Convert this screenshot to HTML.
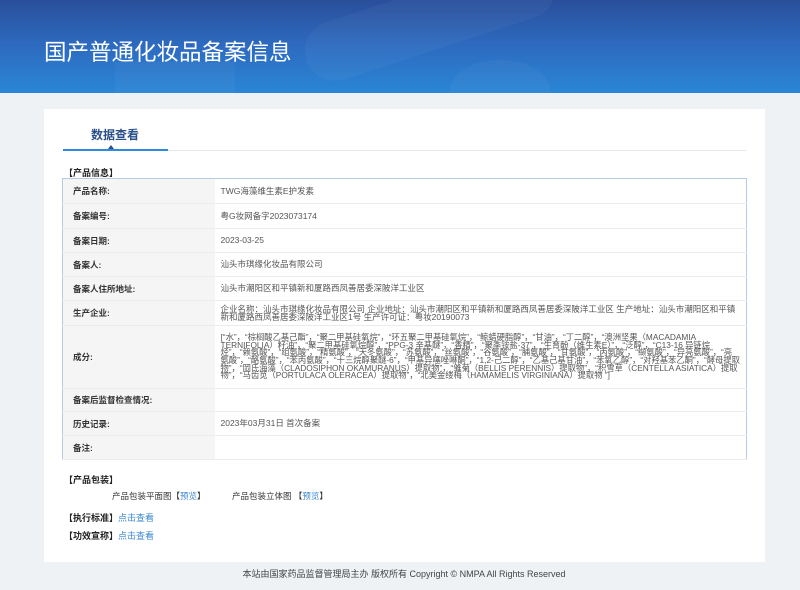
<!DOCTYPE html>
<html><head><meta charset="utf-8"><style>
*{margin:0;padding:0;box-sizing:border-box}
body{width:800px;height:590px;background:#eef2f5;font-family:"Liberation Sans","Noto Sans CJK SC",sans-serif;color:#333;position:relative;overflow:hidden}
.hd{position:absolute;left:0;top:0;width:800px;height:93px;background:linear-gradient(180deg,#2a4f9b 0%,#2d6bc0 50%,#2a86d6 100%);overflow:hidden}
.hd h1{position:absolute;left:44px;top:35px;font-size:22.5px;font-weight:normal;color:#fff;font-family:"Noto Sans CJK SC",sans-serif;letter-spacing:0}
.blob{position:absolute;border-radius:30px;background:rgba(255,255,255,0.035)}
.card{position:absolute;left:44px;top:109px;width:721px;height:453px;background:#fff}
.tab{position:absolute;left:91px;top:126px;font-size:12px;font-weight:bold;color:#2a4f8a}
.tl{position:absolute;left:63px;top:150px;width:683px;height:1px;background:#e3e6ea}
.tb{position:absolute;left:63px;top:149px;width:105px;height:2px;background:#2f8be0}
.tri{position:absolute;left:108px;top:145px;width:0;height:0;border-left:3px solid transparent;border-right:3px solid transparent;border-bottom:4px solid #2a4f8a}
.sec{position:absolute;font-size:9px;font-weight:bold;color:#222}
table{position:absolute;left:62px;top:178px;width:685px;border-collapse:collapse;border:1px solid #b8cbe4;font-size:8.5px}
td{border-bottom:1px solid #ebebeb;padding:0 6px;vertical-align:middle}
td.l{width:152px;background:#f5f5f5;font-weight:bold;color:#333;padding-left:10px}
td.v{color:#555;line-height:8.5px}
a{color:#3a86d0;text-decoration:none}
.sm{position:absolute;font-size:8.5px;color:#333}
.ft{position:absolute;top:567px;left:0;width:800px;text-align:center;font-size:9px;color:#444;padding-left:8px}
</style></head><body>
<div class="hd">
<div class="blob" style="left:300px;top:-10px;width:260px;height:60px;transform:rotate(-18deg)"></div>
<div class="blob" style="left:450px;top:60px;width:100px;height:60px;border-radius:50%"></div>
<div class="blob" style="left:115px;top:62px;width:120px;height:40px;border-radius:0"></div>
<h1>国产普通化妆品备案信息</h1></div>
<div class="card"></div>
<div class="tab">数据查看</div>
<div class="tl"></div><div class="tb"></div><div class="tri"></div>
<div class="sec" style="left:64px;top:166px">【产品信息】</div>
<table>
<tr style="height:25px"><td class="l">产品名称:</td><td class="v">TWG海藻维生素E护发素</td></tr>
<tr style="height:25px"><td class="l">备案编号:</td><td class="v">粤G妆网备字2023073174</td></tr>
<tr style="height:24px"><td class="l">备案日期:</td><td class="v">2023-03-25</td></tr>
<tr style="height:24px"><td class="l">备案人:</td><td class="v">汕头市琪缘化妆品有限公司</td></tr>
<tr style="height:24px"><td class="l">备案人住所地址:</td><td class="v">汕头市潮阳区和平镇新和厦路西凤善居委深陂洋工业区</td></tr>
<tr style="height:25px"><td class="l">生产企业:</td><td class="v">企业名称：汕头市琪缘化妆品有限公司 企业地址：汕头市潮阳区和平镇新和厦路西凤善居委深陂洋工业区 生产地址：汕头市潮阳区和平镇新和厦路西凤善居委深陂洋工业区1号 生产许可证：粤妆20190073</td></tr>
<tr style="height:63px"><td class="v" colspan="1" style="display:none"></td><td class="l">成分:</td><td class="v" style="font-size:8.3px;line-height:7.6px">[“水”，“棕榈酸乙基己酯”，“聚二甲基硅氧烷”，“环五聚二甲基硅氧烷”，“鲸蜡硬脂醇”，“甘油”，“丁二醇”，“澳洲坚果（MACADAMIA TERNIFOLIA）籽油”，“聚二甲基硅氧烷醇”，“PPG-3 辛基醚”，“香精”，“聚季铵盐-37”，“生育酚（维生素E）”，“泛醇”，“C13-16 异链烷烃”，“赖氨酸”，“组氨酸”，“精氨酸”，“天冬氨酸”，“苏氨酸”，“丝氨酸”，“谷氨酸”，“脯氨酸”，“甘氨酸”，“丙氨酸”，“缬氨酸”，“异亮氨酸”，“亮氨酸”，“酪氨酸”，“苯丙氨酸”，“十三烷醇聚醚-6”，“甲基异噻唑啉酮”，“1,2-己二醇”，“乙基己基甘油”，“苯氧乙醇”，“对羟基苯乙酮”，“酵母提取物”，“岡氏海藻（CLADOSIPHON OKAMURANUS）提取物”，“雏菊（BELLIS PERENNIS）提取物”，“积雪草（CENTELLA ASIATICA）提取物”，“马齿苋（PORTULACA OLERACEA）提取物”，“北美金缕梅（HAMAMELIS VIRGINIANA）提取物 ”]</td></tr>
<tr style="height:23px"><td class="l">备案后监督检查情况:</td><td class="v"></td></tr>
<tr style="height:24px"><td class="l">历史记录:</td><td class="v">2023年03月31日 首次备案</td></tr>
<tr style="height:24px"><td class="l">备注:</td><td class="v"></td></tr>
</table>
<div class="sec" style="left:64px;top:473px">【产品包装】</div>
<div class="sm" style="left:112px;top:490px">产品包装平面图【<a>预览</a>】</div>
<div class="sm" style="left:232px;top:490px">产品包装立体图 【<a>预览</a>】</div>
<div class="sec" style="left:64px;top:511px">【执行标准】<a style="font-weight:normal">点击查看</a></div>
<div class="sec" style="left:64px;top:529px">【功效宣称】<a style="font-weight:normal">点击查看</a></div>
<div class="ft">本站由国家药品监督管理局主办 版权所有 Copyright © NMPA All Rights Reserved</div>
</body></html>
